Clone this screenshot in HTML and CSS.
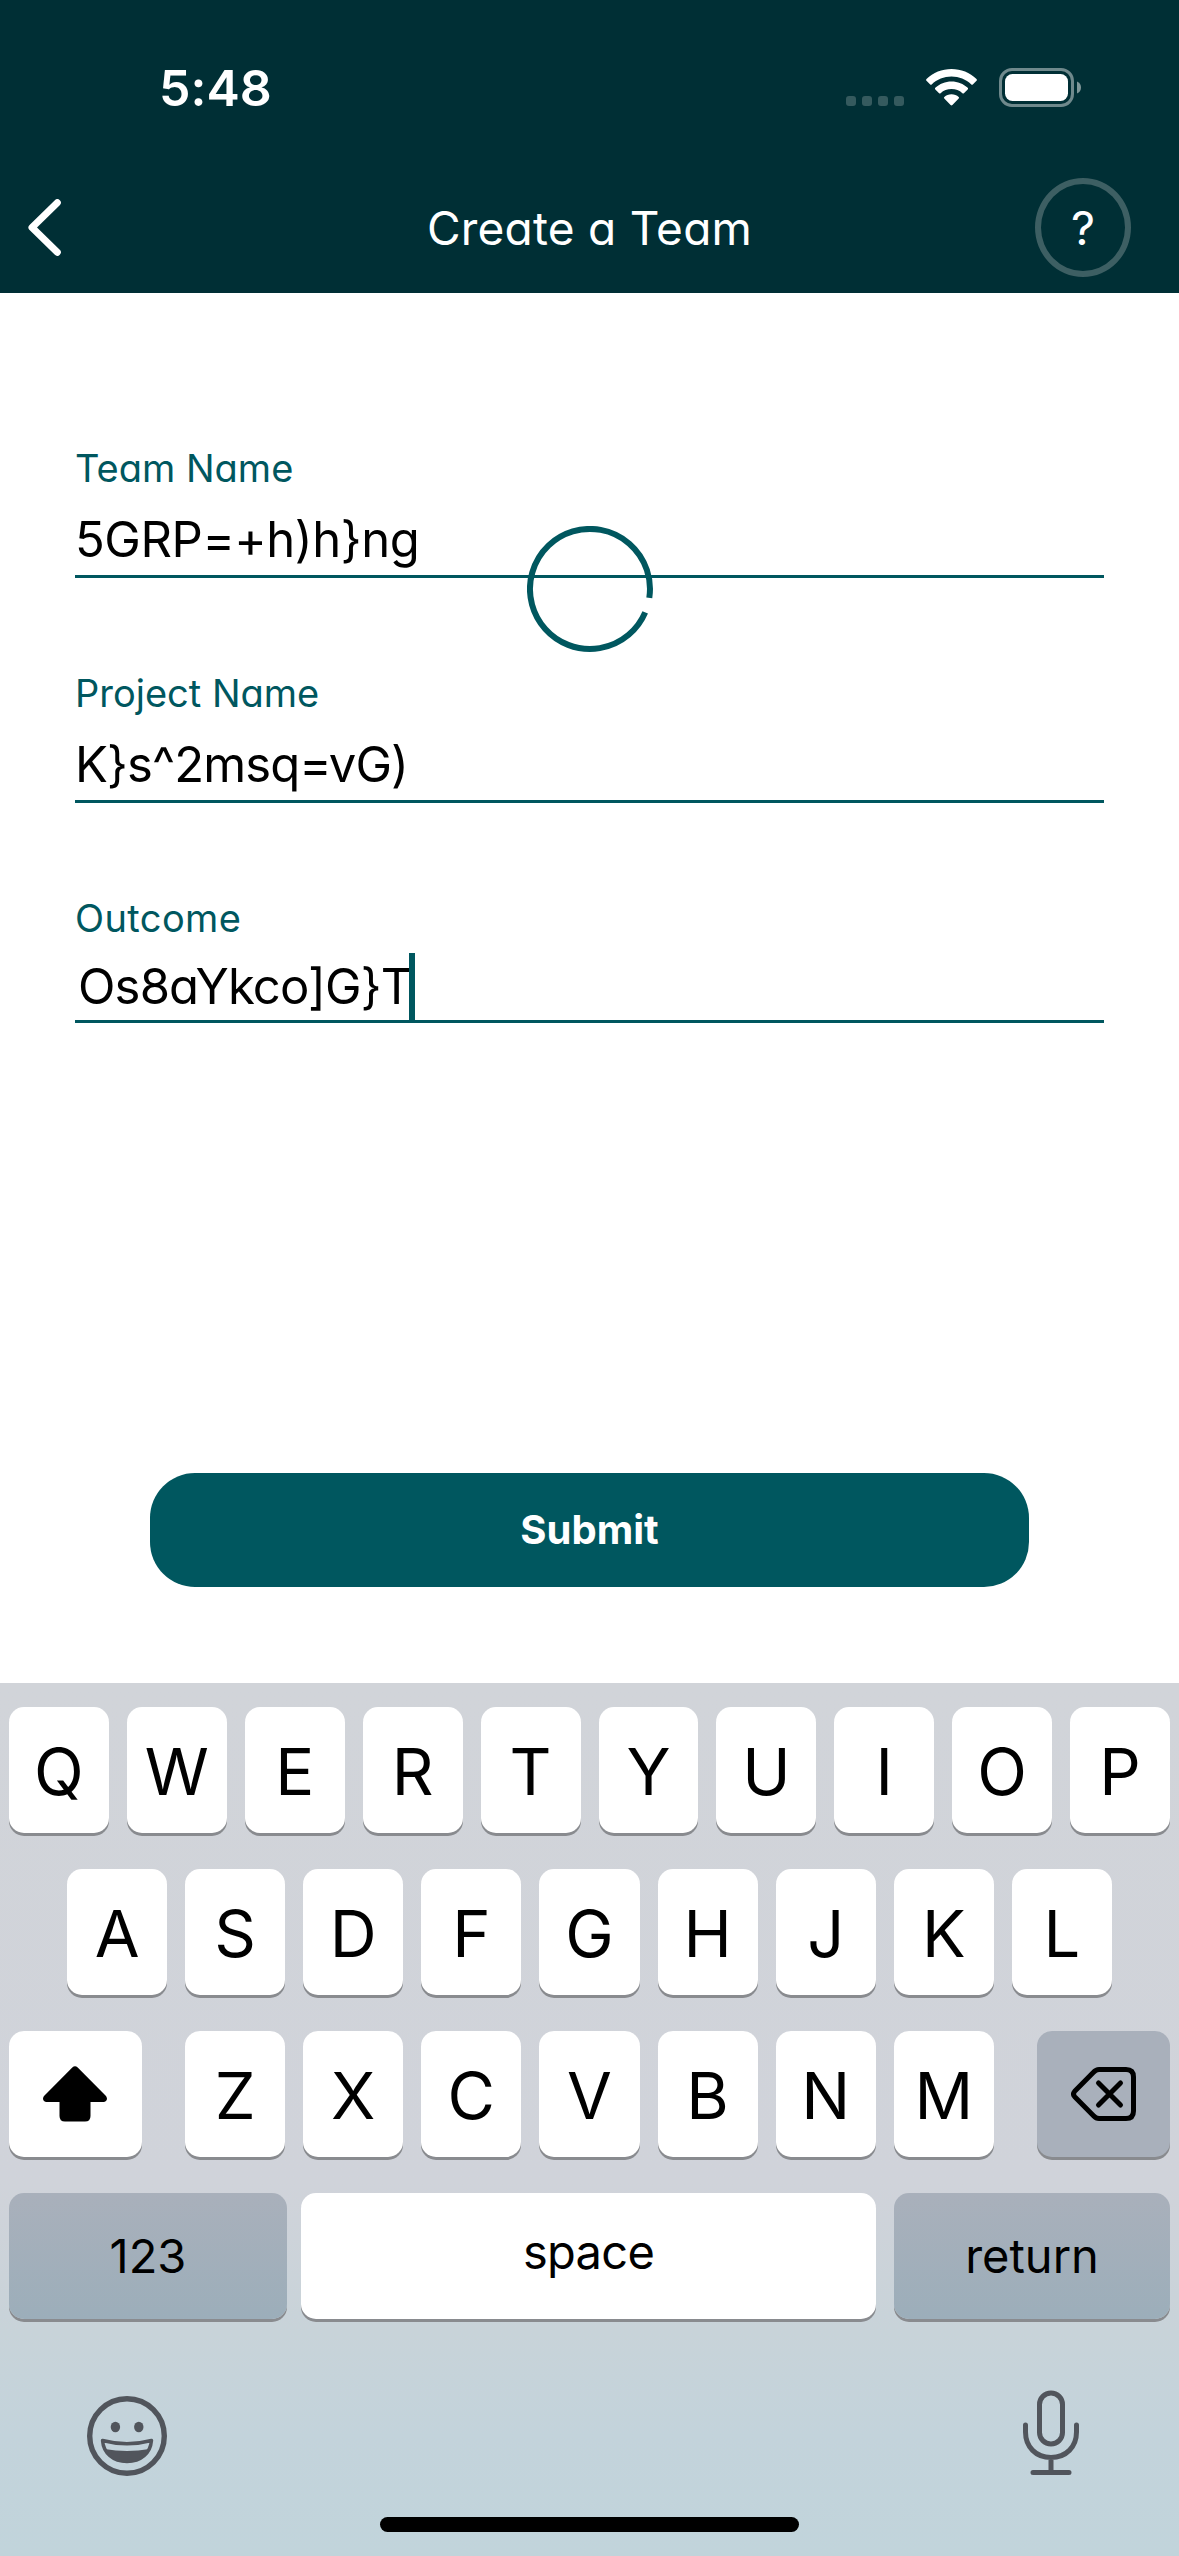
FILE: index.html
```html
<!DOCTYPE html>
<html lang="en">
<head>
<meta charset="utf-8">
<title>Create a Team</title>
<link rel="stylesheet" href="styles.css">
</head>
<body>
<div class="screen">
  <header class="header">
    <div class="status">
      <span class="time">5:48</span>
      <div class="indicators">
        <div class="cell"><i></i><i></i><i></i><i></i></div>
        <svg class="wifi" width="51" height="37" viewBox="0 0 51 37" fill="#fff">
          <path d="M25.500 0C35 0 43.900 3.600 50.500 10.100Q51.300 10.900 50.500 11.700L46.800 15.400Q46.100 16.100 45.300 15.400C40 10.400 33 7.500 25.500 7.500S11 10.400 5.700 15.400Q4.900 16.100 4.200 15.400L.5 11.700Q-.3 10.900.5 10.100C7.100 3.600 16 0 25.500 0Z"/>
          <path d="M25.500 12.500C31.700 12.500 37.400 14.900 41.700 18.800Q42.500 19.600 41.700 20.400L37.900 24.200Q37.200 24.900 36.400 24.200C33.500 21.600 29.700 20.100 25.500 20.100S17.500 21.600 14.600 24.200Q13.800 24.900 13.100 24.200L9.300 20.400Q8.500 19.600 9.300 18.800C13.600 14.900 19.300 12.500 25.500 12.500Z"/>
          <path d="M25.500 25.200C28.300 25.200 30.800 26.200 32.700 27.900Q33.500 28.700 32.700 29.500L26.400 36Q25.500 36.900 24.600 36L18.300 29.500Q17.500 28.700 18.300 27.900C20.200 26.200 22.700 25.200 25.500 25.200Z"/>
        </svg>
        <svg class="battery" width="83" height="39" viewBox="0 0 83 39">
          <rect x="1.500" y="1.500" width="72" height="36" rx="11.500" fill="none" stroke="#6f898c" stroke-width="3"/>
          <rect x="6" y="6" width="63" height="27" rx="7.500" fill="#fff"/>
          <path d="M78 13.500C80.500 14.500 82 16.800 82 19.500S80.500 24.500 78 25.500Z" fill="#7f9799"/>
        </svg>
      </div>
    </div>
    <nav class="nav">
      <svg class="back" width="33" height="57" viewBox="0 0 33 57" fill="none" stroke="#fff" stroke-width="7" stroke-linecap="round" stroke-linejoin="round"><path d="M29.300 3.700L4 28.500L29.300 53.300"/></svg>
      <h1 class="title">Create a Team</h1>
      <div class="help">?</div>
    </nav>
  </header>

  <main class="form">
    <div class="field">
      <div class="label team-label">Team Name</div>
      <div class="value team-value">5GRP=+h)h}ng</div>
    </div>
    <div class="field">
      <div class="label project-label">Project Name</div>
      <div class="value project-value">K}s^2msq=vG)</div>
    </div>
    <div class="field">
      <div class="label outcome-label">Outcome</div>
      <div class="value active"><span class="outcome-value">Os8aYkco]G}T</span><i class="caret"></i></div>
    </div>
    <div class="submit">Submit</div>
    <svg class="spinner" width="126" height="126" viewBox="0 0 126 126" fill="none" stroke="#00575f" stroke-width="6"><path d="M122.300 71.900A60 60 0 1 0 118.200 86.400"/></svg>
  </main>

  <section class="keyboard">
    <div class="row"><div class="key">Q</div><div class="key">W</div><div class="key">E</div><div class="key">R</div><div class="key">T</div><div class="key">Y</div><div class="key">U</div><div class="key">I</div><div class="key">O</div><div class="key">P</div></div>
    <div class="row home"><div class="key">A</div><div class="key">S</div><div class="key">D</div><div class="key">F</div><div class="key">G</div><div class="key">H</div><div class="key">J</div><div class="key">K</div><div class="key">L</div></div>
    <div class="row lower">
      <div class="key side">
        <svg class="shift" width="64" height="56" viewBox="0 0 64 56"><path d="M29.300 1.500Q32 -1 34.700 1.500L62.500 29.500C65.500 32.700 63.500 36 60.500 36H47.500V50Q47.500 55.500 42 55.500H22Q16.500 55.500 16.500 50V36H3.500C.5 36-1.500 32.700 1.500 29.500Z"/></svg>
      </div>
      <div class="letters"><div class="key">Z</div><div class="key">X</div><div class="key">C</div><div class="key">V</div><div class="key">B</div><div class="key">N</div><div class="key">M</div></div>
      <div class="key side gray">
        <svg class="delete" width="65" height="54" viewBox="0 0 65 54" fill="none" stroke="#000" stroke-width="5" stroke-linecap="round" stroke-linejoin="round"><path d="M28 2.500H55Q62.500 2.500 62.500 10V44Q62.500 51.500 55 51.500H28Q25 51.500 22.500 48.800L3.700 29.700Q1.300 27 3.700 24.300L22.500 5.200Q25 2.500 28 2.500Z"/><path d="M27.500 16L49.500 38M49.500 16L27.500 38"/></svg>
      </div>
    </div>
    <div class="row bottom">
      <div class="key word gray numbers">123</div>
      <div class="key word space">space</div>
      <div class="key word gray return">return</div>
    </div>
    <div class="tools">
      <svg width="80" height="80" viewBox="0 0 80 80" fill="none" stroke="#51555c">
        <circle cx="40" cy="40" r="37.300" stroke-width="5.400"/>
        <ellipse cx="28.400" cy="31" rx="4.700" ry="5.300" fill="#51555c" stroke="none"/>
        <ellipse cx="51.800" cy="31" rx="4.700" ry="5.300" fill="#51555c" stroke="none"/>
        <path d="M15.500 44.500Q40 51 64.500 44.500C63.500 57 54 65.500 40 65.500S16.500 57 15.500 44.500Z" stroke-width="3.400" stroke-linejoin="round"/>
        <path d="M17.500 53Q40 57 62.500 53C59 61.500 51.500 66.500 40 66.500S21 61.500 17.500 53Z" fill="#51555c" stroke="none"/>
      </svg>
      <svg class="mic" width="56" height="86" viewBox="0 0 56 86" fill="none" stroke="#51555c" stroke-width="5" stroke-linecap="round">
        <rect x="16.500" y="3" width="23" height="51" rx="11.500"/>
        <path d="M2.500 35V42C2.500 57 13 67.500 28 67.500S53.500 57 53.500 42V35M28 67.500V82.500M10 82.500H46"/>
      </svg>
    </div>
    <div class="home-indicator"></div>
  </section>
</div>
</body>
</html>
```
FILE: styles.css
```css
* { box-sizing: border-box; }
body { margin: 0; background: #fff; }
svg { display: block; flex: none; }

.screen {
  width: 1179px;
  height: 2556px;
  display: flex;
  flex-direction: column;
  overflow: hidden;
  font-family: Inter, "Liberation Sans", sans-serif;
  font-feature-settings: "cv11", "calt" 0;
  color: #000;
}

/* header */
.header { height: 293px; background: #002f35; color: #fff; flex: none; }
.status {
  height: 178px;
  padding: 58px 97px 0 159px;
  display: flex;
  justify-content: space-between;
  align-items: flex-start;
}
.time { font-size: 50px; font-weight: 600; line-height: 60px; }
.indicators { display: flex; padding-top: 10px; }
.cell { display: flex; gap: 6px; padding-top: 28px; }
.cell i { width: 10px; height: 10px; border-radius: 3px; background: #355a5e; }
.wifi { margin: 1px 22px 0; }
.nav {
  height: 99px;
  padding: 0 48px 0 28px;
  display: grid;
  grid-template-columns: 116px 1fr 96px;
  align-items: center;
}
.title { margin: 0; text-align: center; font-size: 46px; font-weight: 400; line-height: 60px; letter-spacing: .25px; }
.help {
  height: 99px;
  border: 6px solid #3d5f63;
  border-radius: 50%;
  font-size: 47px;
  line-height: 87px;
  text-align: center;
}

/* form */
.form {
  position: relative;
  flex: none;
  height: 1390px;
  padding: 155px 75px 0;
  display: flex;
  flex-direction: column;
  gap: 95px;
}
.label { height: 56px; font-size: 38px; line-height: 40px; color: #00575f; white-space: nowrap; }
.outcome-label { height: 55px; letter-spacing: .4px; }
.value {
  height: 74px;
  border-bottom: 3px solid #00575f;
  font-size: 49px;
  line-height: 71px;
  white-space: nowrap;
}
.team-value { letter-spacing: -.45px; }
.project-value { letter-spacing: -.9px; }
.value.active { height: 70px; line-height: 67px; padding-left: 3px; display: flex; }
.outcome-value { width: 331px; letter-spacing: -.85px; }
.caret { width: 6px; height: 67px; background: #00575f; }
.submit {
  height: 114px;
  margin: 355px 75px 0;
  border-radius: 45px;
  background: #00575f;
  color: #fff;
  font-size: 40px;
  font-weight: 700;
  line-height: 114px;
  text-align: center;
}
.spinner { position: absolute; left: 526.5px; top: 233px; }

/* keyboard */
.keyboard {
  flex: 1;
  padding: 24px 9px 0;
  display: flex;
  flex-direction: column;
  font-feature-settings: normal;
  background: linear-gradient(#d1d4d9 0, #d0d3da 500px, #c8d3d9 650px, #c3d3db 750px, #c1d4db 100%);
}
.row { display: flex; gap: 18px; height: 126px; margin-bottom: 36px; flex: none; }
.row.home { padding: 0 58px; }
.key {
  flex: 1 1 0;
  height: 126px;
  display: flex;
  align-items: center;
  justify-content: center;
  padding-top: 3px;
  border-radius: 15px;
  background: #fff;
  box-shadow: 0 3px 0 #898b8f;
  font-size: 65px;
  line-height: 80px;
}
.key.gray { background: #a9b0bb; }
.row.lower { gap: 43px; }
.letters { flex: 1; display: flex; gap: 18px; }
.key.side { flex: 0 0 133px; padding: 0; }
.shift { margin-right: 2px; }
.key.word { font-size: 47px; padding-top: 0; }
.row.bottom { gap: 0; justify-content: space-between; }
.key.numbers { flex: 0 0 278px; background: linear-gradient(#a9b0bb, #9caeba); }
.key.space { flex: 0 0 575px; margin-right: 4px; padding-bottom: 8px; letter-spacing: -.7px; }
.key.return { flex: 0 0 276px; background: linear-gradient(#a9b0bb, #9caeba); }
.tools {
  display: flex;
  justify-content: space-between;
  align-items: flex-start;
  height: 162px;
  padding: 41px 91px 0 78px;
}
.mic { margin-top: -6px; }
.home-indicator { width: 419px; height: 15px; border-radius: 8px; background: #000; align-self: center; }
```
